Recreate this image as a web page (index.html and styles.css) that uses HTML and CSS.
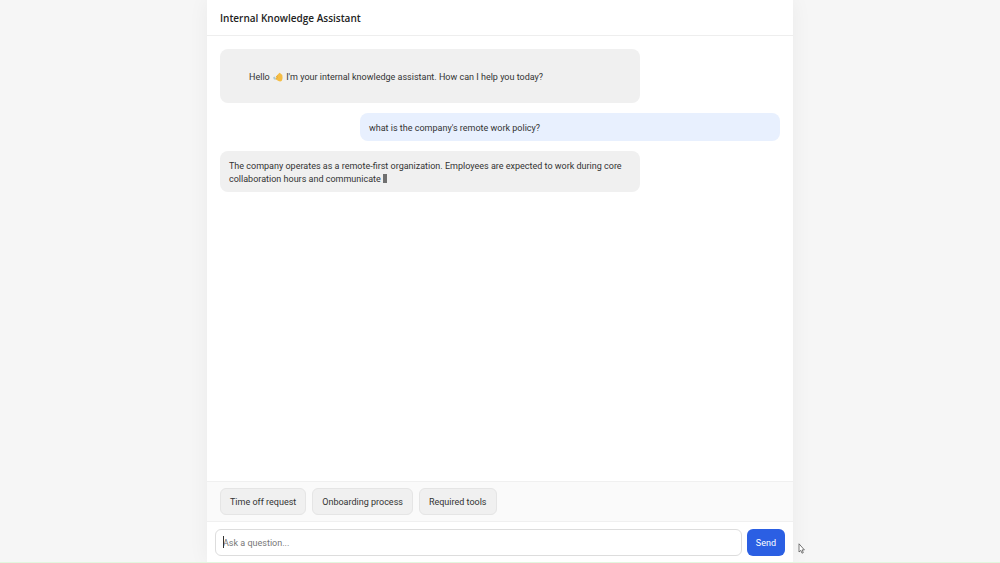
FILE: index.html
```html
<!DOCTYPE html>
<html lang="en">
<head>
<meta charset="utf-8">
<meta name="viewport" content="width=device-width, initial-scale=1">
<title>Internal Knowledge Assistant</title>
<link rel="stylesheet" href="styles.css">
</head>
<body>
<div class="app">
  <header class="header"><h1 class="title">Internal Knowledge Assistant</h1></header>
  <main class="messages">
    <div class="message message-bot message-intro">Hello <svg class="wave" viewBox="0 0 10 10" role="img" aria-label="waving hand"><path d="M0 5.5 2 4.5 3 7.5 1 7.5Z" fill="#a9c8d4"/><path d="M3 4.5 6 1.2Q7 .2 7.5 1.4L9.3 3Q10 6 9 8.5 7.5 10 5.5 9L2.5 7.2Q2 6 3.5 6Z" fill="#f5bd45"/><path d="M3 5 5 3.5M3 6.5 5 5.5" stroke="#dda02e" stroke-width=".6"/></svg> I'm your internal knowledge assistant. How can I help you today?</div>
    <div class="message message-user">what is the company's remote work policy?</div>
    <div class="message message-bot">The company operates as a remote-first organization. Employees are expected to work during core collaboration hours and communicate <span class="typing"></span></div>
  </main>
  <div class="suggestions">
    <button class="chip" type="button">Time off request</button>
    <button class="chip" type="button">Onboarding process</button>
    <button class="chip" type="button">Required tools</button>
  </div>
  <form class="composer">
    <div class="field"><input class="input" type="text" placeholder="Ask a question..." aria-label="Ask a question"><span class="caret"></span></div>
    <button class="send" type="button">Send</button>
  </form>
</div>
<svg class="pointer" viewBox="0 0 7 11" aria-hidden="true"><path d="M1 .8V9L2.8 7.4 4 10.2 5.3 9.6 4.1 6.9H6.4Z" fill="#fff" stroke="#555" stroke-width=".8"/></svg>
</body>
</html>
```
FILE: styles.css
```css
* { box-sizing: border-box; }
body {
  margin: 0;
  background: #f6f6f6;
  border-bottom: 1px solid #e2f7df;
  color: #333;
  font: 9px/13px Roboto, "Liberation Sans", sans-serif;
}
button, input { font: inherit; color: inherit; }
.app {
  display: flex;
  flex-direction: column;
  max-width: 586px;
  height: calc(100vh - 1px);
  margin: 0 auto;
  background: #fff;
  box-shadow: 0 0 20px rgba(0, 0, 0, .05);
}
.header { padding: 11px 13px 10px; border-bottom: 1px solid #eee; }
.title {
  margin: 0;
  font: 600 10px/14px "Open Sans", "Noto Sans", sans-serif;
  color: #222;
}
.messages {
  flex: 1;
  display: flex;
  flex-direction: column;
  gap: 10px;
  padding: 13px;
  overflow: auto;
}
.message { width: 75%; padding: 9px 9px 6px; border-radius: 8px; }
.message-bot { background: #f0f0f0; }
.message-intro { padding: 22px 29px 19px; }
.message-user { align-self: flex-end; background: #e8f0fe; }
.wave { width: 10px; height: 10px; margin: 0 1px; vertical-align: -2px; }
.typing { display: inline-block; width: 4px; height: 9px; background: #707070; vertical-align: -1px; }
.suggestions {
  display: flex;
  flex-wrap: wrap;
  gap: 6px;
  padding: 6px 13px;
  background: #fafafa;
  border-top: 1px solid #f0f0f0;
  border-bottom: 1px solid #f0f0f0;
}
.chip {
  padding: 7px 9px 5px;
  border: 1px solid #e5e5e5;
  border-radius: 6px;
  background: #f0f0f0;
}
.composer { display: flex; gap: 5px; padding: 7px 8px 6px; }
.field { position: relative; flex: 1; display: flex; }
.input {
  width: 100%;
  padding: 7px 7px 5px;
  border: 1px solid #ddd;
  border-radius: 6px;
  outline: 0;
  background: #fff;
}
.input::placeholder { color: #777; opacity: 1; }
.caret { position: absolute; left: 8px; top: 7px; width: 1px; height: 12px; background: #333; }
.send {
  padding: 7px 9px 5px;
  border: 0;
  border-radius: 6px;
  background: #2b5fe3;
  color: #fff;
}
.pointer { position: absolute; left: 798px; top: 543px; width: 7px; height: 11px; }
```
